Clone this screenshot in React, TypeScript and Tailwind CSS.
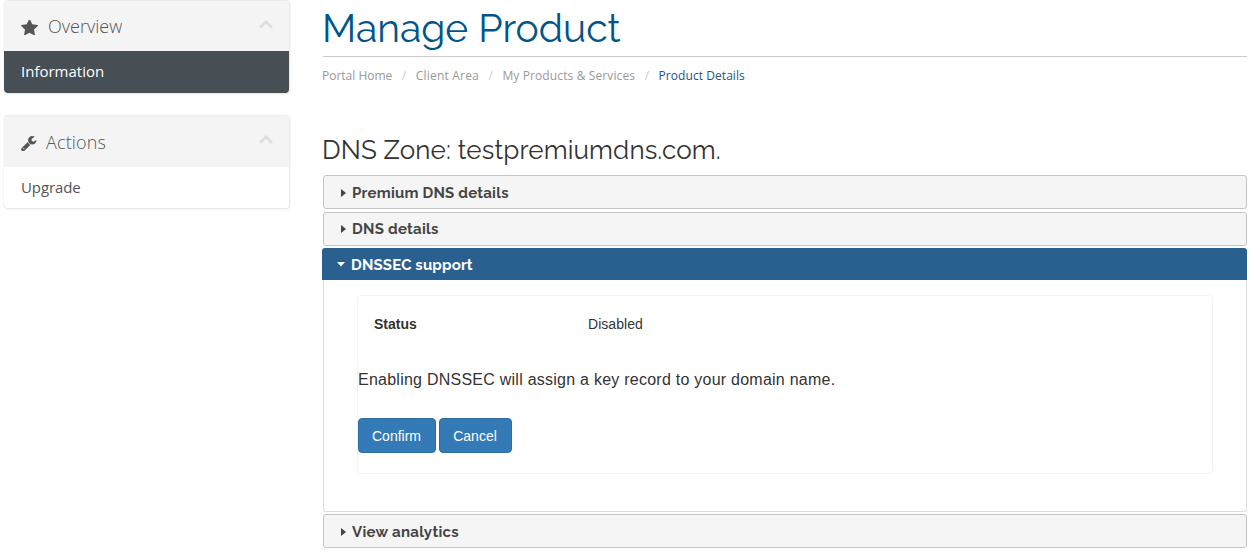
import type { ReactNode } from "react";

function StarIcon() {
  return (
    <svg viewBox="64 128 1664 1492" className="mt-[18.5px] mr-[10px] h-[15.5px] w-[17px] self-start" fill="#555555">
      <path d="M1728 647q0 22-26 48l-363 354 86 500q1 7 1 20 0 21-10.5 35.5t-30.5 14.5q-19 0-40-12l-449-236-449 236q-22 12-40 12-21 0-31.5-14.5t-10.5-35.5q0-6 2-20l86-500-364-354q-25-27-25-48 0-37 56-46l502-73 225-455q19-41 49-41t49 41l225 455 502 73q56 9 56 46z" />
    </svg>
  );
}

function WrenchIcon() {
  return (
    <svg viewBox="85 128 1641 1643" className="mt-[19.5px] mr-[9.5px] h-[15.5px] w-[15.5px] self-start" fill="#555555">
      <path d="M448 1472q0-26-19-45t-45-19-45 19-19 45 19 45 45 19 45-19 19-45zm644-420l-682 682q-37 37-90 37-52 0-91-37l-106-108q-38-36-38-90 0-53 38-91l681-681q39 98 114.5 173.5t173.5 114.5zm634-435q0 39-23 106-47 134-164.5 217.5t-258.5 83.5q-185 0-316.5-131.5t-131.5-316.5 131.5-316.5 316.5-131.5q58 0 121.5 16.5t107.5 46.5q16 11 16 28t-16 28l-293 169v224l193 107q5-3 79-48.5t135.5-81 70.5-35.5q15 0 23.5 10t8.5 25z" />
    </svg>
  );
}

function ChevronUp() {
  return (
    <svg width="14" height="9" viewBox="0 0 14 9" fill="none" stroke="#dddddd" strokeWidth="2.6">
      <path d="M1 7.8 L7 1.9 L13 7.8" />
    </svg>
  );
}

type PanelProps = { icon: ReactNode; title: ReactNode; children: ReactNode };

function Panel({ icon, title, children }: PanelProps) {
  return (
    <section className="overflow-hidden rounded-[4px] border-t border-r border-[#ececec] bg-white shadow-[0_1px_2px_rgba(0,0,0,0.12)]">
      <header className="flex items-center bg-[#f4f4f4] pr-4 pl-[17px] text-[#555555]">
        {icon}
        {title}
        <span className="mt-[19px] ml-auto self-start">
          <ChevronUp />
        </span>
      </header>
      {children}
    </section>
  );
}

type ClosedHeaderProps = { title: string; padding: string; spacing: string };

function ClosedHeader({ title, padding, spacing }: ClosedHeaderProps) {
  return (
    <h3
      className={`ml-px flex h-[34px] items-center rounded-[3px] border border-[#c5c5c5] bg-[#f5f5f5] pl-[17px] font-['Raleway',sans-serif] text-[15px] font-bold text-[#454545] ${padding}`}
    >
      <svg width="5" height="8" viewBox="0 0 5 8" className="mr-[6px]">
        <path d="M0 0 L5 4 L0 8 Z" fill="#444444" />
      </svg>
      <span className={`pt-px ${spacing}`}>{title}</span>
    </h3>
  );
}

function Slash() {
  return <span className="mx-[9.5px] text-[#cccccc]">/</span>;
}

export default function App() {
  return (
    <div className="flex h-[554px] w-[1250px] overflow-hidden bg-white font-['Open_Sans',sans-serif]">
      <aside className="ml-1 flex w-[286px] flex-col gap-[22px]">
        <Panel
          icon={<StarIcon />}
          title={<span className="flex h-[50px] items-center text-[18px] font-light">Overview</span>}
        >
          <div className="flex h-[42px] items-center rounded-b-[3px] bg-[#474f54] pb-[2px] pl-[17px] text-[15px] text-white">
            Information
          </div>
        </Panel>
        <Panel
          icon={<WrenchIcon />}
          title={
            <span className="flex h-[51px] items-center pt-[2px] text-[18px] font-light tracking-[0.15px]">Actions</span>
          }
        >
          <div className="flex h-[41px] items-center pl-[17px] text-[15px] tracking-[-0.1px] text-[#555555]">
            Upgrade
          </div>
        </Panel>
      </aside>

      <main className="ml-8 w-[925px]">
        <h1 className="ml-px h-[57px] border-b border-[#cccccc] font-['Raleway',sans-serif] text-[39px] leading-[56px] text-[#005589]">
          <span className="-ml-px">Manage Product</span>
        </h1>
        <nav className="flex h-[37px] items-center text-[12px] text-[#999999]">
          <span>Portal Home</span>
          <Slash />
          <span className="tracking-[0.2px]">Client Area</span>
          <Slash />
          <span className="tracking-[0.12px]">My Products &amp; Services</span>
          <Slash />
          <span className="tracking-[0.06px] text-[#1a5684]">Product Details</span>
        </nav>
        <h2 className="mt-[36px] h-[45px] font-['Raleway',sans-serif] text-[26px] leading-[40px] tracking-[0.13px] text-[#333333]">
          DNS Zone: testpremiumdns.com.
        </h2>

        <div className="flex flex-col">
          <ClosedHeader title="Premium DNS details" padding="pt-[2px]" spacing="tracking-[0.22px]" />
          <div className="h-[3px]" />
          <ClosedHeader title="DNS details" padding="pt-0" spacing="tracking-[0.25px]" />
          <div className="h-[2px]" />
          <h3 className="flex h-8 items-center rounded-t-[3px] bg-[#29608f] pt-[2px] pl-[15px] font-['Raleway',sans-serif] text-[15px] font-bold text-white">
            <svg width="8" height="5" viewBox="0 0 8 5" className="mr-[6px] mb-px">
              <path d="M0 0 L8 0 L4 4.5 Z" fill="#ffffff" />
            </svg>
            <span className="pt-px tracking-[0.15px]">DNSSEC support</span>
          </h3>
          <div className="ml-px h-[232px] rounded-b-[3px] border border-t-0 border-[#dddddd] pt-[15px] pr-[33px] pl-[33px] font-['Liberation_Sans',sans-serif] text-[#333333]">
            <div className="h-[179px] rounded-[4px] border border-[#f3f3f3]">
              <div className="flex h-[56px] items-center pl-4 text-[14px]">
                <strong className="w-[214px]">Status</strong>
                <span className="tracking-[0.05px]">Disabled</span>
              </div>
              <p className="mt-[16px] h-[50px] text-[16px] leading-6 tracking-[0.245px]">
                Enabling DNSSEC will assign a key record to your domain name.
              </p>
              <div className="flex gap-[3px] text-[14px] text-white">
                <button className="h-[35px] w-[78px] rounded-[4px] border border-[#2e6da4] bg-[#337ab7] pt-px pr-px">
                  Confirm
                </button>
                <button className="h-[35px] w-[73px] rounded-[4px] border border-[#2e6da4] bg-[#337ab7] pt-px pr-px">
                  Cancel
                </button>
              </div>
            </div>
          </div>
          <div className="h-[2px]" />
          <ClosedHeader title="View analytics" padding="pt-[2px]" spacing="tracking-[0.3px]" />
        </div>
      </main>
    </div>
  );
}
